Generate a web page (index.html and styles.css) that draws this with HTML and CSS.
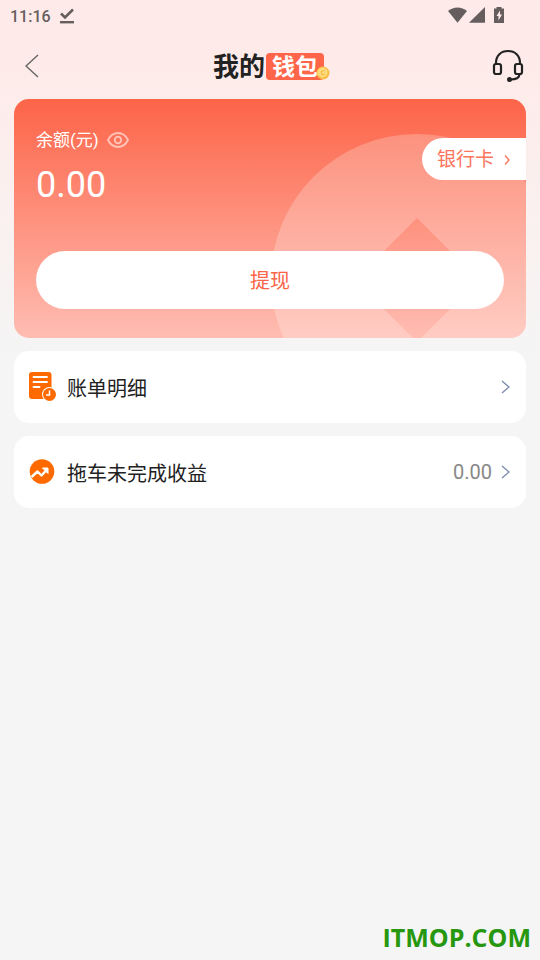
FILE: index.html
```html
<!DOCTYPE html>
<html lang="zh-CN">
<head>
<meta charset="utf-8">
<meta name="viewport" content="width=device-width, initial-scale=1">
<title>我的钱包</title>
<link rel="stylesheet" href="styles.css">
</head>
<body>
<div class="status">
  <span class="time">11:16</span>
  <svg class="download" width="16" height="16" viewBox="0 0 16 16" aria-hidden="true"><path d="M2 5.500 6 9.500 14 1.500" fill="none" stroke="currentColor" stroke-width="2.600"/><path d="M1 13h14v2.400H1z" fill="currentColor"/></svg>
  <svg class="signals" width="58" height="18" viewBox="0 0 58 18" aria-hidden="true" fill="currentColor">
    <path d="M0 4C5.500-.7 13.500-.7 19 4L9.500 15.800Z"/>
    <path d="M37 0V15.800H21Z"/>
    <path d="M48.500 0h5v1.500H56v14.500H46v-14.500h2.500z"/>
    <path d="M52 3.500 48.500 9h2V13.500l3.500-6h-2z" fill="#feebe9"/>
  </svg>
</div>
<header class="header">
  <button class="icon-button" aria-label="返回"><svg width="14" height="24" viewBox="0 0 14 24" fill="none" stroke="#666" stroke-width="1.400"><path d="M13 1 1 12 13 23"/></svg></button>
  <h1 class="title"><span>我的</span><span class="tag">钱包<svg class="coin" width="14" height="14" viewBox="0 0 14 14" aria-hidden="true"><circle cx="7" cy="7" r="6.500" fill="#f9bd45"/><circle cx="6.500" cy="6.500" r="5" fill="#fddb7c"/><path d="M8.500 4.500 5 5.500 6 9 9 8" fill="none" stroke="#f3b745"/></svg></span></h1>
  <button class="icon-button" aria-label="客服"><svg width="32" height="33" viewBox="0 0 32 33" fill="none" stroke="#222" stroke-width="2.200"><path d="M4 15v-1C4 6.500 9 2 16 2s12 4.500 12 12v1"/><rect x="2" y="15" width="7" height="10" rx="2"/><rect x="23" y="15" width="7" height="10" rx="2"/><path d="M27.500 25c0 4-3.500 5.500-9 5.500"/><circle cx="17.500" cy="30.500" r="1.400" fill="#222"/></svg></button>
</header>
<main class="content">
  <section class="card">
    <svg class="card-art" width="254" height="204" viewBox="0 0 254 204" aria-hidden="true"><path fill="#fff" fill-opacity=".23" fill-rule="evenodd" d="M-1 145a146 145 0 1 1 292 0a146 145 0 1 1-292 0ZM145 84 83 146 145 208 207 146Z"/></svg>
    <div class="card-top">
      <div>
        <div class="label"><span>余额(元)</span><button class="eye" aria-label="显示余额"><svg width="22" height="16" viewBox="0 0 22 16" fill="none" stroke="currentColor" stroke-width="1.900"><path d="M1 8C3 4 6.500 1 11 1s8 3 10 7c-2 4-5.500 7-10 7S3 12 1 8Z"/><circle cx="11" cy="8" r="3.200"/></svg></button></div>
        <div class="amount">0.00</div>
      </div>
      <a class="bank" href="#bank"><span>银行卡</span><svg width="6" height="10" viewBox="0 0 6 10" fill="none" stroke="currentColor" stroke-width="1.400"><path d="m1 .5 4 4.500-4 4.500"/></svg></a>
    </div>
    <button class="withdraw">提现</button>
  </section>
  <a class="row" href="#bills">
    <svg class="row-icon" width="28" height="30" viewBox="0 0 28 30" aria-hidden="true"><rect y="0" width="22.500" height="27" rx="3" fill="#ff6a00"/><path d="M4.500 5H18M4.500 10H18M4.500 15h6" stroke="#fff" stroke-width="1.800" stroke-linecap="round"/><circle cx="20.500" cy="22.500" r="7.500" fill="#fff"/><circle cx="20.500" cy="22.500" r="6.500" fill="#ff6a00"/><path d="M20.500 18.500V23H17" fill="none" stroke="#fff" stroke-width="1.500"/></svg>
    <span class="row-name">账单明细</span>
    <svg class="chevron" width="9" height="14" viewBox="0 0 9 14" aria-hidden="true"><path d="m1 1 7 6-7 6"/></svg>
  </a>
  <a class="row" href="#income">
    <svg class="row-icon" width="28" height="26" viewBox="0 0 28 26" aria-hidden="true"><circle cx="13" cy="12.500" r="12.300" fill="#ff6a00"/><path d="m2.500 18 6-5.500 4 4 5-5.500" fill="none" stroke="#fff" stroke-width="2.400" stroke-linejoin="round"/><path d="M13.500 9H19V14.500Z" fill="#fff" stroke="#fff"/></svg>
    <span class="row-name">拖车未完成收益</span>
    <span class="row-value">0.00</span>
    <svg class="chevron" width="9" height="14" viewBox="0 0 9 14" aria-hidden="true"><path d="m1 1 7 6-7 6"/></svg>
  </a>
</main>
<footer class="watermark">ITMOP.COM</footer>
</body>
</html>
```
FILE: styles.css
```css
* {
  box-sizing: border-box;
}

body {
  margin: 0;
  min-height: 100vh;
  display: flex;
  flex-direction: column;
  background: #f5f5f5 linear-gradient(#feebe9 0, #feebe9 60px, #f5f5f5 360px) no-repeat;
  color: #222;
  font-family: Roboto, "Noto Sans CJK SC", sans-serif;
}

button {
  padding: 0;
  border: 0;
  background: none;
  color: inherit;
  font: inherit;
}

a {
  color: inherit;
  text-decoration: none;
}

svg {
  display: block;
  flex: none;
}

.status {
  height: 32px;
  padding: 0 34px 0 10px;
  display: flex;
  align-items: center;
  color: #665e5e;
}

.time {
  font-size: 16px;
  font-weight: 500;
}

.download {
  margin-left: 8px;
}

.signals {
  margin-left: auto;
}

.header {
  height: 67px;
  padding: 0 16px 0 25px;
  display: grid;
  grid-template-columns: 40px 1fr 40px;
  align-items: center;
}

.icon-button:last-child {
  justify-self: end;
}

.title {
  margin: 0;
  display: flex;
  align-items: center;
  justify-content: center;
  gap: 1px;
  padding: 2px 12px 0 0;
  font-size: 26px;
  line-height: 28px;
}

.tag {
  position: relative;
  padding: 2px 6px 0;
  border-radius: 4px;
  background: #ff6549;
  color: #fff;
  font-size: 23px;
  line-height: 25px;
}

.coin {
  position: absolute;
  right: -6px;
  bottom: 0;
}

.content {
  padding: 0 14px;
  display: grid;
  gap: 13px;
}

.card {
  position: relative;
  overflow: hidden;
  padding: 29px 22px;
  border-radius: 15px;
  background: linear-gradient(#fc6448, #ffbdb2);
  color: #fff;
}

.card-art {
  position: absolute;
  right: 0;
  bottom: 0;
}

.card-top {
  position: relative;
  display: flex;
  justify-content: space-between;
  align-items: flex-start;
  margin-bottom: 44px;
}

.label {
  display: flex;
  align-items: center;
  gap: 8px;
  font-size: 17px;
  line-height: 24px;
}

.eye {
  color: #ffc2b5;
}

.amount {
  margin-top: 12px;
  font-size: 36px;
  line-height: 43px;
}

.bank {
  margin: 10px -22px 0 0;
  padding: 2px 16px 0 15px;
  display: flex;
  align-items: center;
  gap: 10px;
  border-radius: 21px 0 0 21px;
  background: #fff;
  color: #fa755c;
  font-size: 19px;
  line-height: 40px;
}

.withdraw {
  position: relative;
  display: block;
  width: 100%;
  padding-top: 2px;
  border-radius: 29px;
  background: #fff;
  color: #fc6448;
  font-size: 20px;
  line-height: 56px;
}

.row {
  height: 72px;
  padding: 0 16px 0 15px;
  display: flex;
  align-items: center;
  border-radius: 15px;
  background: #fff;
}

.row-name {
  margin: 0 auto 0 10px;
  font-size: 20px;
}

.row-value {
  margin-right: 9px;
  color: #888;
  font-size: 20px;
}

.chevron {
  fill: none;
  stroke: #7c8dae;
  stroke-width: 1.4;
}

.watermark {
  margin-top: auto;
  padding: 0 9px 6px;
  color: #26970f;
  font-family: "Open Sans", sans-serif;
  font-size: 25px;
  font-weight: 700;
  line-height: 34px;
  text-align: right;
}
```
